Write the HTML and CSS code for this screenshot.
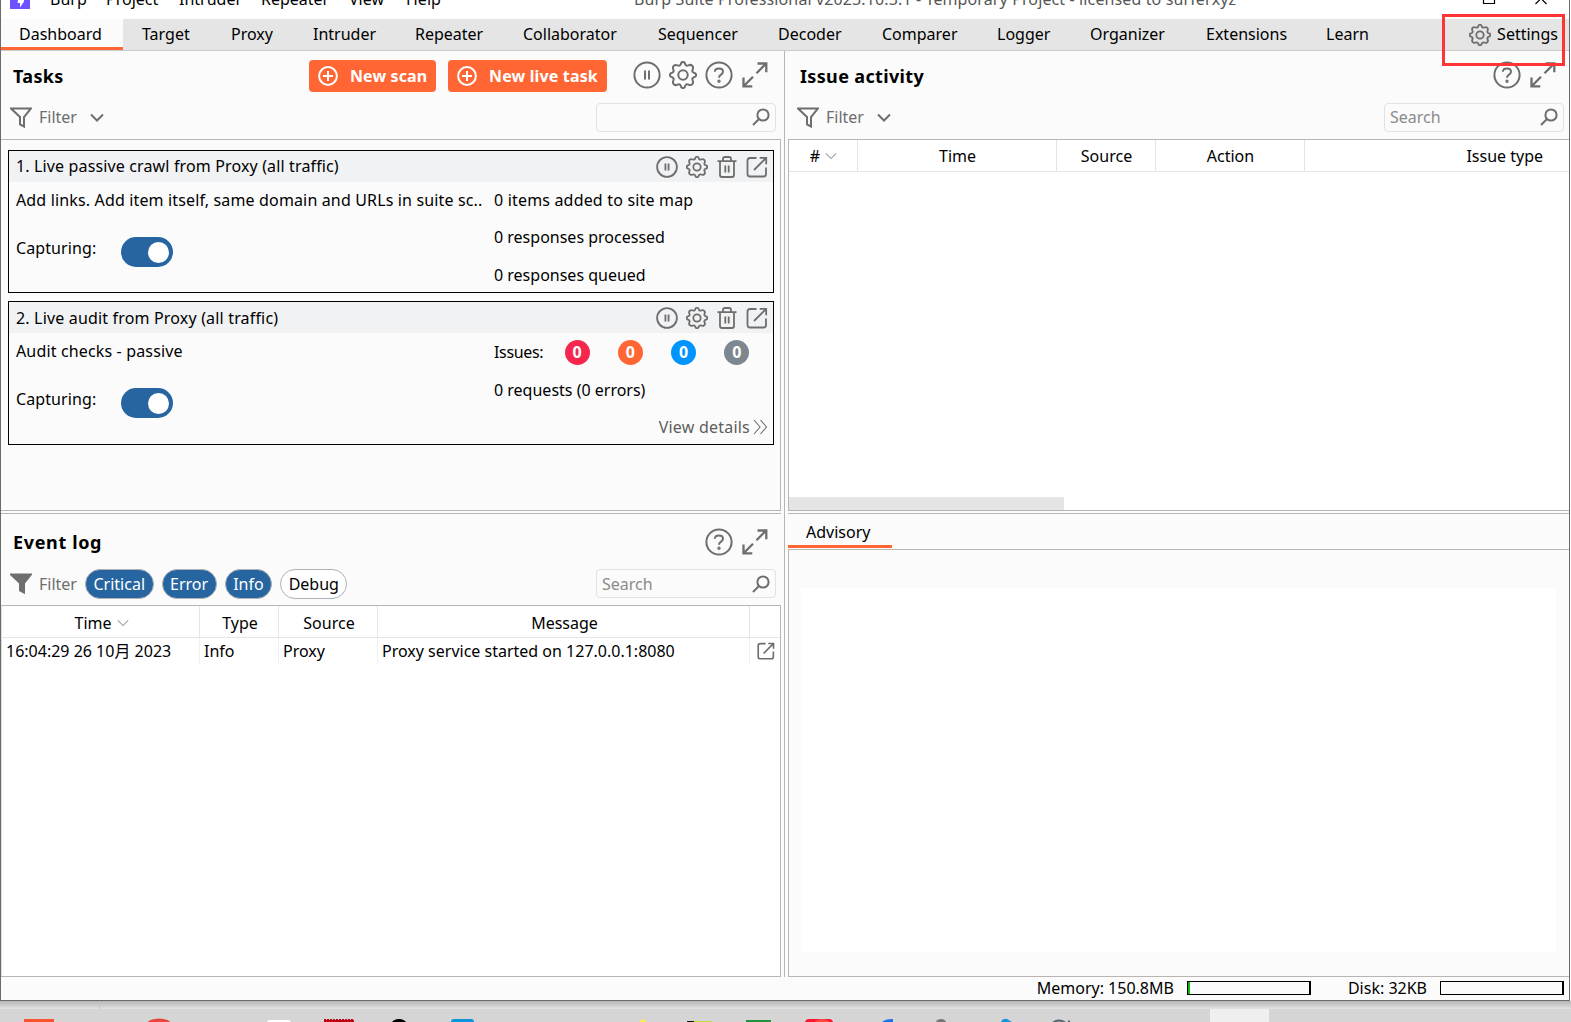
FILE: index.html
```html
<!DOCTYPE html>
<html lang="en">
<head>
<meta charset="utf-8">
<title>Burp Suite Professional</title>
<link rel="stylesheet" href="styles.css">
</head>
<body>
<svg width="0" height="0" class="defs" aria-hidden="true">
  <symbol id="pause" viewBox="0 0 28 28"><circle cx="14" cy="14" r="12.6"/><path d="M12 9.5v9M16 9.5v9"/></symbol>
  <symbol id="gear" viewBox="0 0 28 28"><circle cx="14" cy="14" r="4.7"/><path d="M11.7 3.3 Q12 .9 14 .9 T16.3 3.3 Q17.2 5.3 19.4 4.4 Q21.7 3.2 23.2 4.8 T23.6 8.6 Q22.7 10.8 24.7 11.7 Q27.1 12 27.1 14 T24.7 16.3 Q22.7 17.2 23.6 19.4 Q24.8 21.7 23.2 23.2 T19.4 23.6 Q17.2 22.7 16.3 24.7 Q16 27.1 14 27.1 T11.7 24.7 Q10.8 22.7 8.6 23.6 Q6.3 24.8 4.8 23.2 T4.4 19.4 Q5.3 17.2 3.3 16.3 Q.9 16 .9 14 T3.3 11.7 Q5.3 10.8 4.4 8.6 Q3.2 6.3 4.8 4.8 T8.6 4.4 Q10.8 5.3 11.7 3.3Z"/></symbol>
  <symbol id="help" viewBox="0 0 28 28"><circle cx="14" cy="14" r="12.6"/><path d="M9.8 10.8C10 6.3 18 6.3 18 10.8 18 14 14 13.3 14 16.8"/><circle cx="14" cy="20.3" r=".7"/></symbol>
  <symbol id="expand" viewBox="0 0 28 28"><path d="M15.5 12.2 25 2.7M16.5 2.5h8.8v8.8M12 15.8 2.6 25.2M2.5 16.5v8.8h8.8"/></symbol>
  <symbol id="trash" viewBox="0 0 22 22"><path d="M1.5 5.2h19M4 5.2V19q0 2 2 2h10q2 0 2-2V5.2M7 5V3q0-2 2-2h4q2 0 2 2v2M9.3 9.5v7M12.7 9.5v7"/></symbol>
  <symbol id="popout" viewBox="0 0 22 22"><path d="M10.5 2H4Q1.5 2 1.5 4.5v13.5Q1.5 20.5 4 20.5h13.5q2.5 0 2.5-2.5v-6.500M8 14 20 2M13.700 1.800h6.500v6.500"/></symbol>
  <symbol id="funnel" viewBox="0 0 22 21"><path d="M1 1.500h20l-7 8.500v9.500l-4-2.200V10Z"/></symbol>
  <symbol id="chev" viewBox="0 0 14 9"><path d="M1 1.500 7 7.500 13 1.500"/></symbol>
  <symbol id="mag" viewBox="0 0 18 18"><circle cx="11" cy="7" r="5.600"/><path d="M7 11 1 17"/></symbol>
  <symbol id="plus" viewBox="0 0 20 20"><circle cx="10" cy="10" r="8.900"/><path d="M10 5v10M5 10h10"/></symbol>
</svg>

<div class="desktop">
  <div class="window">
    <header class="titlebar">
      <svg class="logo" viewBox="0 0 20 9"><path fill="#6b51ff" d="M0 0h20v9H0z"/><path fill="#fff" d="M8 0h6v1.500L10 7.500V3H7.500z"/></svg>
      <nav class="menu"><span>Burp</span><span>Project</span><span>Intruder</span><span>Repeater</span><span>View</span><span>Help</span></nav>
      <span class="wintitle">Burp Suite Professional v2023.10.3.1 - Temporary Project - licensed to surferxyz</span>
      <svg class="winctl" viewBox="0 0 70 6"><path d="M1.500 0v3.500h11V0M53.500 4l5.500-5.500L64.500 4"/></svg>
    </header>

    <nav class="tabs">
      <span class="tab active">Dashboard</span><span class="tab">Target</span><span class="tab">Proxy</span><span class="tab">Intruder</span><span class="tab">Repeater</span><span class="tab">Collaborator</span><span class="tab">Sequencer</span><span class="tab">Decoder</span><span class="tab">Comparer</span><span class="tab">Logger</span><span class="tab">Organizer</span><span class="tab">Extensions</span><span class="tab">Learn</span>
      <span class="settings"><svg class="ic i22"><use href="#gear"/></svg>Settings</span>
      <span class="highlight"></span>
    </nav>

    <main class="panes">
      <div class="col left">
        <section class="pane tasks">
          <div class="head">
            <h2>Tasks</h2>
            <button class="btn scan"><svg class="plus"><use href="#plus"/></svg>New scan</button>
            <button class="btn live"><svg class="plus"><use href="#plus"/></svg>New live task</button>
            <div class="tools"><svg class="ic i28"><use href="#pause"/></svg><svg class="ic i28"><use href="#gear"/></svg><svg class="ic i28"><use href="#help"/></svg><svg class="ic i28 ex"><use href="#expand"/></svg></div>
          </div>
          <div class="filter">
            <svg class="ic funnel"><use href="#funnel"/></svg><span class="muted">Filter</span><svg class="ic chev"><use href="#chev"/></svg>
            <div class="search"><span></span><svg class="ic mag"><use href="#mag"/></svg></div>
          </div>
          <div class="tasklist">
            <article class="card">
              <div class="cardhead"><span>1. Live passive crawl from Proxy (all traffic)</span>
                <div class="cardtools"><svg class="ic i22"><use href="#pause"/></svg><svg class="ic i22"><use href="#gear"/></svg><svg class="ic i22"><use href="#trash"/></svg><svg class="ic i22"><use href="#popout"/></svg></div></div>
              <div class="cardbody">
                <div class="info"><span class="desc">Add links. Add item itself, same domain and URLs in suite sc..</span><div class="capture"><span>Capturing:</span><i class="toggle"></i></div></div>
                <div class="stats"><span class="wide">0 items added to site map</span><span>0 responses processed</span><span>0 responses queued</span></div>
              </div>
            </article>
            <article class="card second">
              <div class="cardhead"><span>2. Live audit from Proxy (all traffic)</span>
                <div class="cardtools"><svg class="ic i22"><use href="#pause"/></svg><svg class="ic i22"><use href="#gear"/></svg><svg class="ic i22"><use href="#trash"/></svg><svg class="ic i22"><use href="#popout"/></svg></div></div>
              <div class="cardbody">
                <div class="info"><span class="desc">Audit checks - passive</span><div class="capture"><span>Capturing:</span><i class="toggle"></i></div></div>
                <div class="stats">
                  <div class="issues"><span>Issues:</span><b class="red">0</b><b class="orange">0</b><b class="blue">0</b><b class="grey">0</b></div>
                  <span>0 requests (0 errors)</span>
                  <span class="details">View details<svg viewBox="0 0 15 16"><path d="M1 1l6 7-6 7M7.500 1l6 7-6 7"/></svg></span>
                </div>
              </div>
            </article>
          </div>
        </section>
        <section class="pane log">
          <div class="head">
            <h2>Event log</h2>
            <div class="tools"><svg class="ic i28"><use href="#help"/></svg><svg class="ic i28 ex"><use href="#expand"/></svg></div>
          </div>
          <div class="filter">
            <svg class="ic funnel solid"><use href="#funnel"/></svg><span class="muted">Filter</span>
            <div class="chips"><span class="chip on">Critical</span><span class="chip on">Error</span><span class="chip on">Info</span><span class="chip">Debug</span></div>
            <div class="search"><span>Search</span><svg class="ic mag"><use href="#mag"/></svg></div>
          </div>
          <div class="table">
            <div class="tr th"><span>Time<svg class="sort"><use href="#chev"/></svg></span><span>Type</span><span>Source</span><span>Message</span><span></span></div>
            <div class="tr td"><span>16:04:29 26 10月 2023</span><span>Info</span><span>Proxy</span><span>Proxy service started on 127.0.0.1:8080</span><span><svg class="ic i18"><use href="#popout"/></svg></span></div>
          </div>
        </section>
      </div>
      <div class="split"></div>
      <div class="col right">
        <section class="pane activity">
          <div class="head">
            <h2>Issue activity</h2>
            <div class="tools"><svg class="ic i28"><use href="#help"/></svg><svg class="ic i28 ex"><use href="#expand"/></svg></div>
          </div>
          <div class="filter">
            <svg class="ic funnel"><use href="#funnel"/></svg><span class="muted">Filter</span><svg class="ic chev"><use href="#chev"/></svg>
            <div class="search"><span>Search</span><svg class="ic mag"><use href="#mag"/></svg></div>
          </div>
          <div class="table">
            <div class="tr th"><span>#<svg class="sort"><use href="#chev"/></svg></span><span>Time</span><span>Source</span><span>Action</span><span>Issue type</span></div>
            <div class="scroll"></div>
          </div>
        </section>
        <section class="pane advisory">
          <div class="advtabs"><span>Advisory</span></div>
          <div class="advbody"><div class="sheet"></div></div>
        </section>
      </div>
    </main>

    <footer class="status"><span>Memory: 150.8MB</span><i class="meter mem"></i><span class="disk">Disk: 32KB</span><i class="meter"></i></footer>
  </div>
  <div class="wallpaper"></div>
  <div class="taskbar">
    <svg viewBox="0 0 1571 13" width="1571" height="13">
      <path fill="#efefef" d="M1210 0h59v13h-59z"/>
      <path fill="#f9532f" d="M24 10h30v3H24z"/>
      <ellipse cx="159" cy="15" rx="12" ry="5.500" fill="#e8453c"/>
      <rect x="267" y="11" width="24" height="6" rx="3" fill="#fff"/>
      <path d="M324 11h30" stroke="#c00010" stroke-width="2" stroke-dasharray="2 1"/><path fill="#c00010" d="M324 11h30v2h-30z"/>
      <ellipse cx="399" cy="14" rx="7" ry="4" fill="#000"/>
      <rect x="451" y="10" width="23" height="6" rx="3" fill="#0d93d8"/>
      <ellipse cx="643" cy="13" rx="3" ry="2.500" fill="#ffef4a"/>
      <path fill="#111" d="M687 12h12v1h-12z"/><path fill="#b9d92c" d="M694 12h18v1h-18z"/>
      <path fill="#23923d" d="M746 11h25v2h-25z"/>
      <rect x="805" y="10" width="28" height="8" rx="4" fill="#fb1730"/><ellipse cx="822" cy="13" rx="7" ry="3" fill="#ff4a3c"/>
      <path fill="#1473e6" d="M882 13q3-3 11-3v3z"/>
      <ellipse cx="941" cy="13" rx="5" ry="3" fill="#777"/>
      <path fill="#1695dc" d="M1001 13q2-4 6-3l5 3z"/>
      <path d="M1053 13.500q6-4 12 0M1069 11.500v2" stroke="#53646c" stroke-width="2" fill="none"/>
    </svg>
  </div>
</div>
</body>
</html>
```
FILE: styles.css
```css
* { box-sizing: border-box; }
body {
  margin: 0;
  overflow: hidden;
  font: 16px/20px "Noto Sans", "Noto Sans CJK SC", sans-serif;
  color: #000;
}
.defs { position: absolute; }
.desktop { width: 1571px; height: 1022px; display: flex; flex-direction: column; overflow: hidden; }
.window {
  height: 1001px; flex: none; width: 1570px;
  display: flex; flex-direction: column;
  background: #fbfbfb;
  border: 1px solid #6b6b6b; border-top: 0;
}
span { white-space: nowrap; }
svg { flex: none; display: block; }

.titlebar { height: 19px; flex: none; background: #fff; display: flex; overflow: hidden; }
.logo { width: 20px; height: 9px; margin-left: 9px; }
.menu { display: grid; grid-template-columns: 56px 73px 82px 88px 57px 51px; margin: -11px 0 0 20px; height: 20px; }
.wintitle { margin: -11px 0 0 177px; width: 603px; height: 20px; color: #555; letter-spacing: .12px; }
.winctl { width: 70px; height: 6px; margin-left: 245px; fill: none; stroke: #000; stroke-width: 1.2; }

.tabs {
  position: relative; flex: none; height: 32px;
  display: grid; grid-template-columns: 122px 89px 82px 102px 108px 135px 120px 104px 115px 93px 116px 120px 1fr auto;
  background: #e5e5e5; border-bottom: 1px solid #c9cccc;
}
.tab { padding: 5px 0 0 19px; }
.tab.active { padding-left: 18px; background: #fbfbfb; border-bottom: 3px solid #ff6633; }
.settings { display: flex; gap: 6px; padding: 5px 11px 0 0; }
.highlight { position: absolute; left: 1441px; top: -5px; width: 123px; height: 52px; border: 3px solid #ff3535; }

.panes { flex: 1; min-height: 0; display: flex; }
.col { display: flex; flex-direction: column; }
.left { width: 780px; }
.split { border-left: 1px solid #bab5b5; margin-left: 3px; width: 4px; }
.right { flex: 1; }
.pane { display: flex; flex-direction: column; }
.tasks, .activity { height: 460px; flex: none; border-bottom: 1px solid #bab5b5; }
.head { height: 48px; flex: none; display: flex; align-items: center; padding: 1px 12px 0 12px; }
h2 { margin: 0; font-size: 18px; line-height: 24px; font-weight: 700; letter-spacing: .35px; }
.tools { margin-left: auto; display: flex; gap: 8px; }
.head .tools { margin-top: -1px; }
.tasks .tools { margin-left: 26px; }
.ic { fill: none; stroke: #6e6e6e; stroke-width: 2; }
.i28 { width: 28px; height: 28px; }
.ex { stroke-width: 2.3; }
.i22 { width: 22px; height: 22px; }
.cardtools .i22, .settings .i22 { stroke-width: 1.8; }
.i22 use[href="#gear"], .i22 use[href="#pause"] { stroke-width: 2.3; }
.i18 { width: 18px; height: 18px; }
.btn {
  height: 32px; border: 0; border-radius: 4px; padding: 0 9px;
  display: flex; align-items: center; gap: 12px;
  background: #ff6633; color: #fff; font: 700 16px/20px "Noto Sans", sans-serif; white-space: nowrap;
}
.scan { width: 127px; margin-left: auto; letter-spacing: .1px; }
.live { width: 159px; margin-left: 12px; letter-spacing: .15px; }
.plus { width: 20px; height: 20px; fill: none; stroke: #fff; stroke-width: 2; }

.filter { height: 40px; flex: none; display: flex; align-items: center; padding: 0 5px 4px 9px; }
.funnel { width: 22px; height: 21px; margin-right: 7px; }
.solid { fill: #6e6e6e; }
.muted { color: #6e6e6e; width: 38px; }
.chev { width: 14px; height: 9px; margin-left: 13px; }
.search {
  margin-left: auto; width: 180px; height: 29px;
  display: flex; align-items: center; justify-content: space-between;
  border: 1px solid #e2e2e2; border-radius: 4px; padding: 0 5px 0 5px; color: #8a8a8a;
}
.mag { width: 18px; height: 18px; }

.tasklist { flex: 1; border-top: 1px solid #bab5b5; border-right: 1px solid #bab5b5; padding: 10px 6px 0 7px; }
.card { height: 143px; border: 1px solid #000; }
.second { height: 144px; margin-top: 8px; }
.cardhead { height: 31px; background: #f1f2f4; display: flex; align-items: center; justify-content: space-between; padding: 0 5px 0 7px; letter-spacing: .14px; }
.cardhead > span { padding-bottom: 1px; }
.second .cardhead > span { padding-bottom: 0; letter-spacing: .17px; }
.cardtools { display: flex; gap: 8px; }
.cardbody { display: grid; grid-template-columns: 485px 1fr; }
.info { padding: 8px 0 0 7px; }
.desc { letter-spacing: .15px; }
.capture { display: flex; padding-top: 25px; height: 58px; }
.capture span { width: 105px; padding-top: 3px; letter-spacing: .1px; }
.toggle { width: 52px; height: 30px; border-radius: 15px; background: #2665a0; display: flex; align-items: center; justify-content: flex-end; padding-right: 4px; margin-top: 2px; }
.toggle::after { content: ""; width: 21px; height: 21px; border-radius: 50%; background: #fff; }
.stats { display: flex; flex-direction: column; gap: 17.400px; padding-top: 8px; }
.wide { letter-spacing: .18px; }
.second .stats { gap: 17.500px; padding-top: 9px; }
.issues { display: flex; height: 20px; align-items: center; }
.issues span { width: 70.500px; letter-spacing: -.35px; margin-top: -1px; }
.issues b { width: 25px; height: 25px; border-radius: 50%; color: #fff; text-align: center; line-height: 25px; margin-right: 28.300px; flex: none; }
.issues b:last-child { margin-right: 0; }
.red { background: #f5274e; }
.orange { background: #ff6633; }
.blue { background: #0094ff; }
.grey { background: #7e8790; }
.details { color: #5e5e5e; display: flex; align-items: center; justify-content: flex-end; gap: 3px; padding-right: 5px; letter-spacing: .22px; }
.details svg { width: 15px; height: 16px; fill: none; stroke: #6e6e6e; stroke-width: 1.1; }

.log, .advisory { flex: 1; margin-top: 2px; border-top: 1px solid #bab5b5; border-bottom: 1px solid #bab5b5; }
.log .head { height: 55px; padding-top: 1px; }
.log h2 { letter-spacing: .65px; }
.log .filter { height: 36px; padding-bottom: 7px; }
.chips { display: flex; gap: 8px; margin-left: 8px; }
.chip { height: 30px; border: 1px solid #aeb0b4; border-radius: 15px; padding: 4px 7.500px; line-height: 20px; background: #fff; }
.chip.on { background: #2665a0; color: #fff; }
.table { flex: 1; display: flex; flex-direction: column; background: #fff; border: 1px solid #bab5b5; border-left-color: #ddd; border-bottom: 0; }
.tr { display: grid; }
.log .tr { grid-template-columns: 198px 79px 99px 372px 1fr; }
.activity .tr { grid-template-columns: 69px 199px 99px 149px 1fr; }
.activity .table { border-left-color: #bab5b5; border-right: 0; }
.th { height: 32px; border-bottom: 1px solid #e5e5e5; }
.th span { display: flex; align-items: center; justify-content: center; border-right: 1px solid #e5e5e5; }
.th span:last-child { border-right: 0; }
.log .th span { padding: 3px 0 0 2px; }
.activity .th span { padding-left: 1px; }
.activity .th span:last-child { justify-content: flex-end; padding-right: 26px; }
.sort { width: 12px; height: 8px; margin-left: 5px; fill: none; stroke: #a0a0a0; stroke-width: 1.3; }
.td { height: 26px; }
.td span { padding: 3px 0 0 4px; border-right: 1px solid #f1f1f1; }
.td span:last-child { border: 0; padding: 4px 0 0 7px; }
.scroll { margin-top: auto; width: 275px; height: 13px; background: #e5e5e5; }

.advtabs { height: 36px; flex: none; display: flex; border-bottom: 1px solid #bab5b5; }
.advtabs span { width: 104px; height: 34px; padding: 8px 0 0 18px; border-bottom: 3px solid #ff6633; }
.advbody { flex: 1; display: flex; border-left: 1px solid #bab5b5; padding: 38px 13px 24px 12px; }
.sheet { flex: 1; background: #fff; }

.status { height: 23px; flex: none; display: flex; align-items: center; justify-content: flex-end; padding: 0 5px 1px 0; }
.meter { width: 124px; height: 14px; border: 1px solid #000; border-right-width: 2px; margin-left: 13px; }
.mem { background: linear-gradient(90deg, #0ab80a 2px, transparent 2px); }
.disk { margin-left: 37px; }
.wallpaper { height: 8px; flex: none; background: linear-gradient(90deg, transparent 99px, #c4c4c4 99px 100px, transparent 100px), linear-gradient(#b5b5b5, #e2e2e2); }
.taskbar { height: 13px; flex: none; background: #d5d5d5; }
```
